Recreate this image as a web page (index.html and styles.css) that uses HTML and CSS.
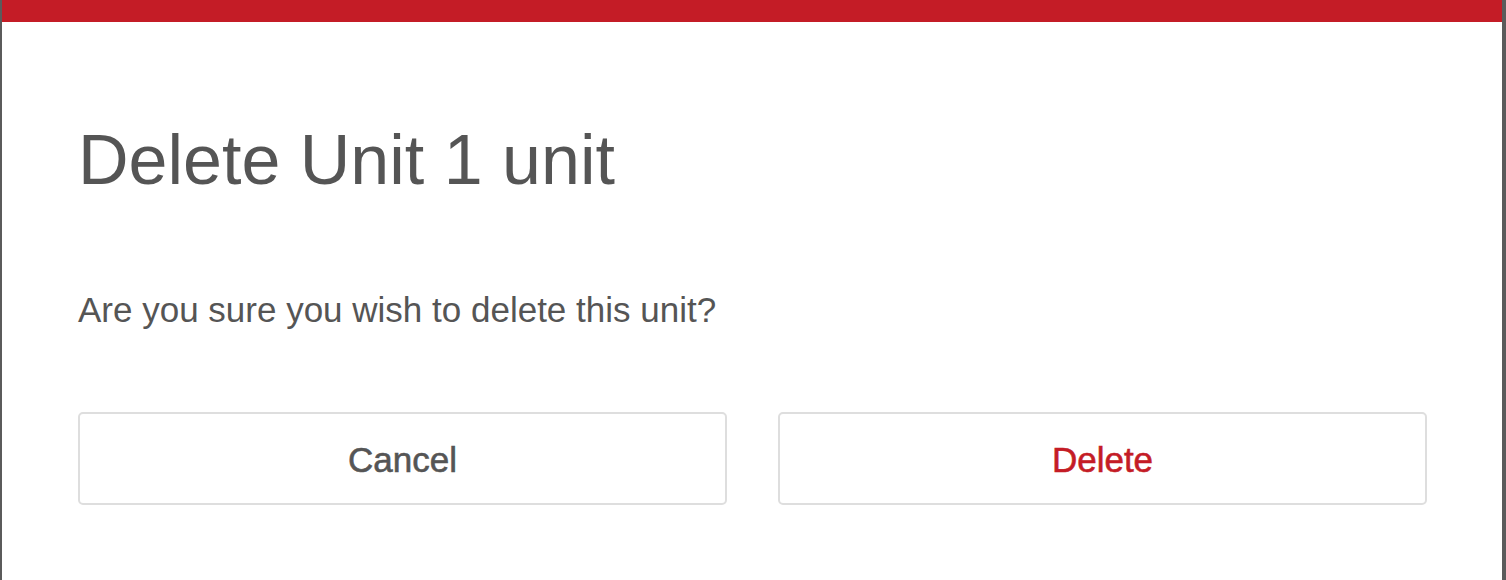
FILE: index.html
```html
<!DOCTYPE html>
<html lang="en">
<head>
    <meta charset="UTF-8">
    <meta name="viewport" content="width=device-width, initial-scale=1.0">
    <title>Delete unit</title>
    <link rel="stylesheet" href="styles.css">
</head>
<body>
    <div class="modal">
        <div class="modal-bar"></div>
        <div class="modal-body">
            <h1 class="modal-title">Delete Unit 1 unit</h1>
            <p class="modal-text">Are you sure you wish to delete this unit?</p>
            <div class="modal-actions">
                <button class="btn">Cancel</button>
                <button class="btn btn-danger">Delete</button>
            </div>
        </div>
    </div>
</body>
</html>
```

FILE: styles.css
```css
*{
    margin: 0;
    padding: 0;
    box-sizing: border-box;
}
body{
    background: #5b5b5b;
    font-family: "Liberation Sans", Arial, sans-serif;
    height: 580px;
    overflow: hidden;
}
.modal{
    margin: 0 4px 0 2px;
    background: white;
    height: 580px;
}
.modal-bar{
    height: 22px;
    background: #c41c26;
}
.modal-body{
    padding: 103px 75px 0 76px;
}
.modal-title{
    font-size: 70px;
    line-height: 70px;
    font-weight: 400;
    color: #555;
}
.modal-text{
    margin-top: 97px;
    font-size: 35px;
    line-height: 35px;
    color: #555;
}
.modal-actions{
    margin-top: 85px;
    display: flex;
    gap: 51px;
}
.btn{
    flex: 1;
    height: 93px;
    padding-top: 2px;
    background: white;
    border: 2px solid #dedede;
    border-radius: 5px;
    font-family: inherit;
    font-size: 35px;
    color: #555;
    -webkit-text-stroke: 0.6px currentColor;
}
.btn-danger{
    color: #c41c26;
}
```
